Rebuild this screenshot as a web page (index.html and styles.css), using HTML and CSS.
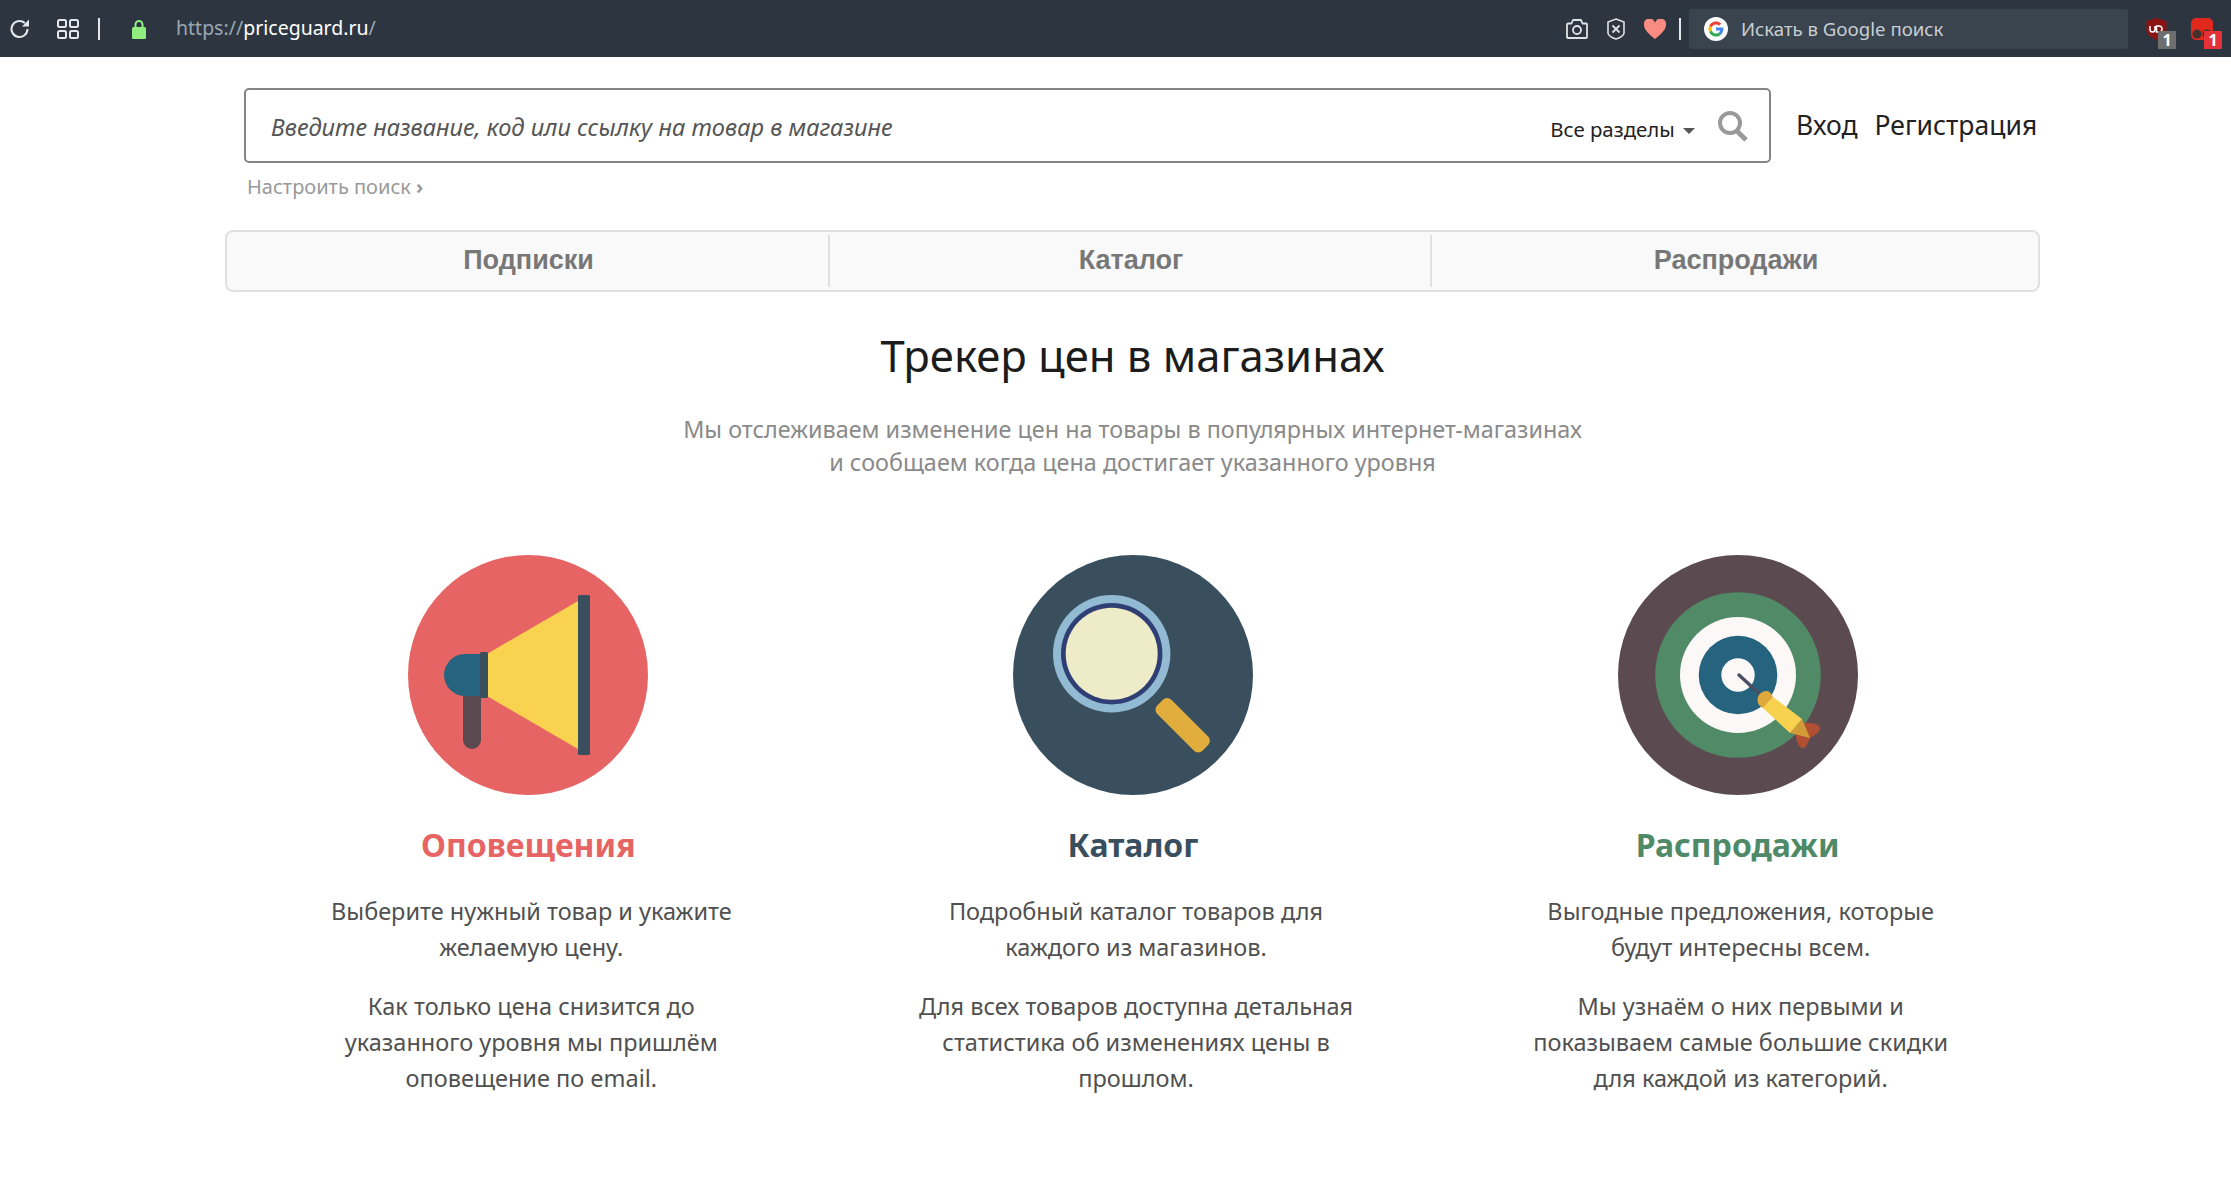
FILE: index.html
```html
<!DOCTYPE html>
<html lang="ru">
<head>
    <meta charset="UTF-8">
    <title>PriceGuard</title>
    <link rel="stylesheet" href="styles.css">
</head>
<body>
<div class="browser-bar">
    <svg class="ic-reload" width="22" height="22" viewBox="0 0 22 22"><path d="M18.5 11a8 8 0 1 1-2.6-5.9" fill="none" stroke="#e4e8ec" stroke-width="2"/><path d="M20 1.5v7h-7z" fill="#e4e8ec"/></svg>
    <svg class="ic-grid" width="22" height="20" viewBox="0 0 22 20"><g fill="none" stroke="#e4e8ec" stroke-width="2"><rect x="1" y="1" width="8" height="7" rx="1.5"/><rect x="13" y="1" width="8" height="7" rx="1.5"/><rect x="1" y="12" width="8" height="7" rx="1.5"/><rect x="13" y="12" width="8" height="7" rx="1.5"/></g></svg>
    <span class="bar-sep sep-left"></span>
    <svg class="ic-lock" width="14" height="20" viewBox="0 0 14 20"><path d="M3.5 9V5.5a3.5 3.5 0 0 1 7 0V9" fill="none" stroke="#90ee80" stroke-width="2"/><rect y="8" width="14" height="12" rx="1.5" fill="#90ee80"/></svg>
    <div class="url"><span class="url-proto">https://</span>priceguard.ru<span class="url-proto">/</span></div>
    <div class="bar-right">
        <svg class="ic-camera" width="22" height="20" viewBox="0 0 22 20"><path d="M1 5.500a1 1 0 0 1 1-1h3.500L7 1h8l1.500 3.500H20a1 1 0 0 1 1 1V18a1 1 0 0 1-1 1H2a1 1 0 0 1-1-1z" fill="none" stroke="#dfe3e6" stroke-width="1.800" stroke-linejoin="round"/><circle cx="11" cy="11" r="4" fill="none" stroke="#dfe3e6" stroke-width="1.800"/></svg>
        <svg class="ic-shield" width="18" height="22" viewBox="0 0 18 22"><path d="M9 1l8 3v11c0 2.500-4.500 5-8 6-3.500-1-8-3.500-8-6V4z" fill="none" stroke="#dfe3e6" stroke-width="1.600"/><path d="M5.500 7.500l7 7M12.500 7.500l-7 7" stroke="#dfe3e6" stroke-width="1.800"/></svg>
        <svg class="ic-heart" width="22" height="20" viewBox="0 0 22 20"><path d="M11 20C5 15 0 11 0 6a5.500 5.500 0 0 1 11-2 5.500 5.500 0 0 1 11 2c0 5-5 9-11 14z" fill="#f98b82"/></svg>
        <span class="bar-sep"></span>
        <div class="g-search">
            <svg class="ic-google" width="24" height="24" viewBox="0 0 24 24"><circle cx="12" cy="12" r="12" fill="#fff"/><path d="M12 7.500a4.500 4.500 0 0 1 3 1.200l2.200-2.200A7.600 7.600 0 0 0 5.200 8.600l2.600 2A4.500 4.500 0 0 1 12 7.500z" fill="#ea4335"/><path d="M7.800 13.400l-2.600 2a7.600 7.600 0 0 1 0-6.800l2.600 2a4.500 4.500 0 0 0 0 2.800z" fill="#fbbc05"/><path d="M12 16.500a4.500 4.500 0 0 1-4.200-3.100l-2.600 2A7.600 7.600 0 0 0 17 17.700l-2.400-1.900a4.500 4.500 0 0 1-2.600.7z" fill="#34a853"/><path d="M19.400 10.600H12v3h4.200a3.600 3.600 0 0 1-1.600 2.200l2.400 1.900c1.500-1.400 2.600-3.700 2.400-7.100z" fill="#4285f4"/></svg>
            <span>Искать в Google поиск</span>
        </div>
        <div class="ext ext-ublock">
            <svg width="21" height="22" viewBox="0 0 21 22"><path d="M10.500 0l10 3v10c0 3.500-5.500 7-10 9-4.500-2-10-5.500-10-9V3z" fill="#8b1313"/><path d="M4 8v3.500a2.500 2.500 0 0 0 5 0V8M10.500 8h2.500a2.500 2.500 0 0 1 0 6h-2.500z" fill="none" stroke="#fff" stroke-width="1.500"/></svg>
            <span class="ext-badge badge-grey">1</span>
        </div>
        <div class="ext ext-red">
            <svg width="22" height="22" viewBox="0 0 22 22"><rect width="22" height="22" rx="5" fill="#e0281c"/><circle cx="6" cy="16" r="4.500" fill="#44302f"/><circle cx="16" cy="16" r="4.500" fill="#44302f"/></svg>
            <span class="ext-badge badge-red">1</span>
        </div>
    </div>
</div>

<div class="page">
    <div class="head-row">
        <div class="search-box">
            <div class="search-hint">Введите название, код или ссылку на товар в магазине</div>
            <div class="search-section">Все разделы <span class="caret"></span></div>
            <svg class="search-icon" width="32" height="32" viewBox="0 0 32 32"><circle cx="13" cy="13" r="10" fill="none" stroke="#999" stroke-width="4"/><path d="M20 21l9 9" stroke="#999" stroke-width="5"/></svg>
        </div>
        <a class="head-link link-login">Вход</a>
        <a class="head-link">Регистрация</a>
    </div>
    <div class="search-setup">Настроить поиск <span class="chev">›</span></div>

    <div class="tabs">
        <div class="tab">Подписки</div>
        <div class="tab">Каталог</div>
        <div class="tab">Распродажи</div>
    </div>

    <h1 class="main-title">Трекер цен в магазинах</h1>
    <p class="main-sub">Мы отслеживаем изменение цен на товары в популярных интернет-магазинах<br>и сообщаем когда цена достигает указанного уровня</p>

    <div class="features">
        <div class="feature">
            <svg class="feature-img" width="240" height="240" viewBox="0 0 240 240">
                <circle cx="120" cy="120" r="120" fill="#e76464"/>
                <path d="M55 130h18v55a9 9 0 0 1-18 0z" fill="#5b4b50"/>
                <path d="M57 99h15v42H57a21 21 0 0 1 0-42z" fill="#26637f"/>
                <path d="M79 99l91-53v148l-91-53z" fill="#f9d24f"/>
                <rect x="72" y="97" width="8" height="46" rx="1.500" fill="#3a4f5e"/>
                <rect x="170" y="40" width="12" height="160" rx="1.500" fill="#3a4f5e"/>
            </svg>
            <h2 class="feature-title title-red">Оповещения</h2>
            <p>Выберите нужный товар и укажите<br>желаемую цену.</p>
            <p>Как только цена снизится до<br>указанного уровня мы пришлём<br>оповещение по email.</p>
        </div>
        <div class="feature">
            <svg class="feature-img" width="240" height="240" viewBox="0 0 240 240">
                <circle cx="120" cy="120" r="120" fill="#3a4f5e"/>
                <circle cx="98.700" cy="98.700" r="58.700" fill="#92bad2"/>
                <circle cx="98.700" cy="98.700" r="50.700" fill="#2f3f73"/>
                <circle cx="98.700" cy="98.700" r="46" fill="#eeebc9"/>
                <rect x="137.700" y="160.300" width="64" height="20" rx="6" transform="rotate(45 169.700 170.300)" fill="#e1ad3c"/>
            </svg>
            <h2 class="feature-title title-dark">Каталог</h2>
            <p>Подробный каталог товаров для<br>каждого из магазинов.</p>
            <p>Для всех товаров доступна детальная<br>статистика об изменениях цены в<br>прошлом.</p>
        </div>
        <div class="feature">
            <svg class="feature-img" width="240" height="240" viewBox="0 0 240 240">
                <circle cx="120" cy="120" r="120" fill="#5b4b50"/>
                <circle cx="120" cy="120" r="82.800" fill="#518a67"/>
                <circle cx="120" cy="120" r="58" fill="#fcf8f8"/>
                <circle cx="120" cy="120" r="39.300" fill="#26637f"/>
                <circle cx="120" cy="120" r="16.700" fill="#fcf8f8"/>
                <path d="M121 120l25 23" stroke="#4a5064" stroke-width="3.500" stroke-linecap="round"/>
                <path d="M185 168c7 0 15 0 17 4 1 4-4 8-10 11-2 5-4 10-7 10-4 0-7-7-7-13z" fill="#b24f33"/>
                <path d="M184 164l8 19-20-5z" fill="#d19b35"/>
                <path d="M155 142l29 22-12 14-27-25z" fill="#f8d24f"/>
                <path d="M148.300 136c2 0 4 .5 6.700 6l-10 11-3-2c-2-2-2.500-4-2.500-6 0-5 4-9 8.800-9z" fill="#dfa83a"/>
            </svg>
            <h2 class="feature-title title-green">Распродажи</h2>
            <p>Выгодные предложения, которые<br>будут интересны всем.</p>
            <p>Мы узнаём о них первыми и<br>показываем самые большие скидки<br>для каждой из категорий.</p>
        </div>
    </div>
</div>
</body>
</html>
```

FILE: styles.css
```css
* {
    box-sizing: border-box;
}
html, body {
    margin: 0;
    padding: 0;
}
body {
    background-color: #fff;
    font-family: "Noto Sans", sans-serif;
    color: #505050;
}

.browser-bar {
    display: flex;
    align-items: center;
    height: 57px;
    padding-left: 9px;
    background-color: #2d3640;
}
.ic-grid {
    margin-left: 26px;
}
.bar-sep {
    display: block;
    width: 2px;
    height: 22px;
    background-color: #e4e8ec;
}
.sep-left {
    margin-left: 19px;
}
.ic-lock {
    margin-left: 32px;
}
.url {
    margin-left: 30px;
    margin-top: -2px;
    font-size: 19.5px;
    color: #fff;
}
.url-proto {
    color: #9aa7b3;
}
.bar-right {
    display: flex;
    align-items: center;
    margin-left: auto;
}
.ic-shield {
    margin-left: 19px;
}
.ic-heart {
    margin-left: 19px;
}
.bar-right .bar-sep {
    margin-left: 13px;
}
.g-search {
    display: flex;
    align-items: center;
    width: 439px;
    height: 40px;
    margin-left: 8px;
    padding-left: 15px;
    border-radius: 3px;
    background-color: #3a444f;
    font-size: 18.6px;
    color: #c9ced3;
}
.g-search span {
    margin-left: 13px;
}
.ext {
    position: relative;
    display: flex;
    height: 22px;
}
.ext-ublock {
    margin-left: 18px;
}
.ext-red {
    margin-left: 24px;
    margin-right: 18px;
}
.ext-badge {
    position: absolute;
    right: -9px;
    bottom: -9px;
    width: 18px;
    height: 18px;
    font-size: 16px;
    line-height: 18px;
    font-weight: bold;
    text-align: center;
    color: #fff;
}
.badge-grey {
    background-color: #6e6e6e;
}
.badge-red {
    background-color: #e53238;
}

.page {
    width: 1815px;
    margin-left: 225px;
}
.head-row {
    display: flex;
    align-items: center;
    padding-top: 31px;
    padding-left: 19px;
}
.search-box {
    display: flex;
    align-items: center;
    width: 1527px;
    height: 75px;
    padding: 0 20px 0 25px;
    border: 2px solid #858585;
    border-radius: 5px;
}
.search-hint {
    flex: 1;
    margin-top: 2px;
    font-size: 23.6px;
    font-style: italic;
    color: #555;
}
.search-section {
    font-size: 20.4px;
    color: #222;
    margin-top: 6px;
}
.caret {
    display: inline-block;
    margin-left: 3px;
    vertical-align: middle;
    border-left: 6px solid transparent;
    border-right: 6px solid transparent;
    border-top: 6px solid #555;
}
.search-icon {
    margin-left: 22px;
    margin-top: 1px;
}
.head-link {
    font-size: 26.5px;
    color: #222;
    margin-left: 17px;
    margin-top: -2px;
}
.link-login {
    margin-left: 25px;
}
.search-setup {
    margin: 10px 0 0 22px;
    font-size: 20px;
    color: #999;
}
.chev {
    font-weight: bold;
}
.tabs {
    display: flex;
    height: 62px;
    margin-top: 30px;
    padding: 3px 0;
    border: 2px solid #e0e0e0;
    border-radius: 8px;
    background-color: #f9f9f9;
}
.tab {
    flex: none;
    width: 602px;
    padding-left: 2px;
    font-family: "Liberation Sans", sans-serif;
    font-size: 27px;
    font-weight: bold;
    line-height: 50px;
    text-align: center;
    color: #777;
    border-left: 2px solid #e0e0e0;
}
.tab:first-child {
    width: 601px;
    border-left: 0;
}
.tab:last-child {
    flex: 1;
}
.main-title {
    margin: 37px 0 0;
    font-size: 43.6px;
    line-height: 52px;
    font-weight: normal;
    text-align: center;
    color: #1c1c1c;
}
.main-sub {
    margin: 32px 0 0;
    font-size: 23.4px;
    line-height: 33px;
    text-align: center;
    color: #8a8a8a;
}
.features {
    display: flex;
    width: 1814px;
    margin-top: 76px;
    margin-left: 1px;
}
.feature {
    flex: 1;
    text-align: center;
}
.feature-img {
    display: block;
    margin: 0 auto;
}
.feature-title {
    margin: 27px 0 0;
    font-size: 32px;
    line-height: 46px;
    font-weight: bold;
}
.title-red {
    color: #e76464;
}
.title-dark {
    color: #3a4f5e;
}
.title-green {
    color: #4f8a68;
}
.feature p {
    margin: 0;
    padding-left: 6px;
    font-size: 23.5px;
    line-height: 36px;
}
.feature-title + p {
    margin-top: 25px;
}
.feature p + p {
    margin-top: 23px;
}
```
